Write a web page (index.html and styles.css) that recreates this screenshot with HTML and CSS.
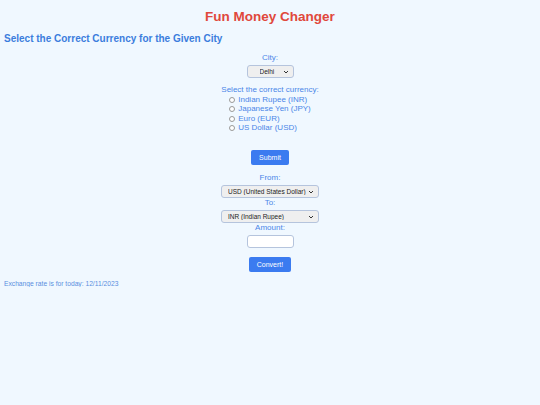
FILE: index.html
```html
<!DOCTYPE html>
<html lang="en">
<head>
    <meta charset="UTF-8">
    <title>Fun Money Changer</title>
    <link rel="stylesheet" href="styles.css">
</head>
<body>
<h1 class="title">Fun Money Changer</h1>
<h2 class="subtitle">Select the Correct Currency for the Given City</h2>

<form class="quiz" onsubmit="return false">
    <label for="city">City:</label>
    <select id="city" class="select city-select">
        <option>Delhi</option>
        <option>Tokyo</option>
        <option>Paris</option>
        <option>New York</option>
    </select>
    <p class="question">Select the correct currency:</p>
    <div class="options">
        <label><input type="radio" name="currency" value="INR"> Indian Rupee (INR)</label>
        <label><input type="radio" name="currency" value="JPY"> Japanese Yen (JPY)</label>
        <label><input type="radio" name="currency" value="EUR"> Euro (EUR)</label>
        <label><input type="radio" name="currency" value="USD"> US Dollar (USD)</label>
    </div>
    <button class="btn btn-submit">Submit</button>
</form>

<form class="converter" onsubmit="return false">
    <label for="from">From:</label>
    <select id="from" class="select currency-select">
        <option>USD (United States Dollar)</option>
        <option>INR (Indian Rupee)</option>
    </select>
    <label for="to">To:</label>
    <select id="to" class="select currency-select">
        <option>INR (Indian Rupee)</option>
        <option>USD (United States Dollar)</option>
    </select>
    <label for="amount">Amount:</label>
    <input type="text" id="amount" class="amount">
    <button class="btn btn-convert">Convert!</button>
</form>

<p class="rate-note">Exchange rate is for today: 12/11/2023</p>
</body>
</html>
```

FILE: styles.css
```css
body {
    margin: 0;
    padding: 0 4px;

    font-family: "Liberation Sans", Arial, sans-serif;
    color: #4a86e8;
    background-color: #f0f8ff;
}

.title {
    margin: 8px 0 0;

    font-size: 13.5px;
    line-height: 17px;
    text-align: center;
    color: #e0483c;
}

.subtitle {
    margin: 8px 0 0;

    font-size: 10px;
    line-height: 12px;
    color: #3b7ddd;
}

.quiz,
.converter {
    display: flex;
    flex-direction: column;
    align-items: center;

    font-size: 8px;
    line-height: 10px;
}

.quiz {
    margin-top: 8px;
}

.select {
    box-sizing: border-box;
    height: 13px;
    margin-top: 2px;

    font-family: inherit;
    font-size: 6.5px;
    color: #222;

    border: 1px solid #b5c4dd;
    border-radius: 3px;
    background: #efefef url("data:image/svg+xml,%3Csvg xmlns='http://www.w3.org/2000/svg' width='6' height='4'%3E%3Cpath d='M1 1l2 2 2-2' fill='none' stroke='%23333' stroke-width='1'/%3E%3C/svg%3E") no-repeat right 4px center;

    appearance: none;
}

.city-select {
    width: 47px;
    padding: 0 10px 0 12px;
}

.question {
    margin: 7px 0 0;
}

.options {
    display: flex;
    flex-direction: column;
}

.options label {
    display: flex;
    align-items: center;
    gap: 3px;

    height: 9.5px;
}

.options input {
    box-sizing: border-box;
    width: 6px;
    height: 6px;
    margin: 0;

    border: 1px solid #999;
    border-radius: 50%;
    background: #fff;

    appearance: none;
}

.btn {
    height: 15px;
    padding: 0 8px;

    font-family: inherit;
    font-size: 7px;
    color: #fff;

    border: none;
    border-radius: 2px;
    background-color: #3b7bf0;
}

.btn-submit {
    margin-top: 17px;
}

.converter {
    margin-top: 8px;
}

.currency-select {
    width: 98px;
    padding: 0 10px 0 6px;
}

.amount {
    box-sizing: border-box;
    width: 47px;
    height: 13px;
    margin-top: 2px;

    border: 1px solid #b5c4dd;
    border-radius: 3px;
    background-color: #fff;
}

.btn-convert {
    margin-top: 9px;
}

.rate-note {
    margin: 8px 0 0;

    font-size: 6.7px;
    color: #5a8fe0;
}
```
